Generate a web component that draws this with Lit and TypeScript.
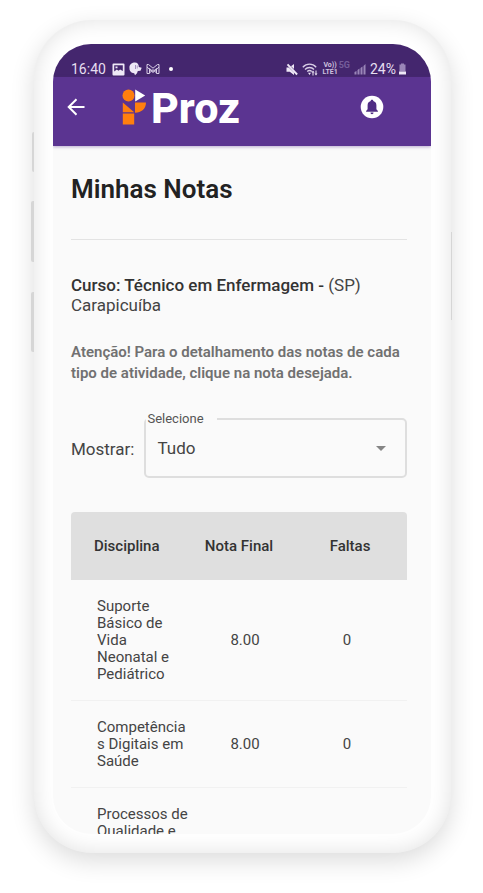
import { LitElement, html, css } from "lit";
import { customElement, state } from "lit/decorators.js";

interface Grade {
  subject: string;
  grade: string;
  absences: number;
}

const GRADES: Grade[] = [
  { subject: "Suporte Básico de Vida Neonatal e Pediátrico", grade: "8.00", absences: 0 },
  { subject: "Competências Digitais em Saúde", grade: "8.00", absences: 0 },
  { subject: "Processos de Qualidade e Segurança do Paciente", grade: "8.00", absences: 0 },
];

@customElement("status-bar")
class StatusBar extends LitElement {
  static styles = css`
    :host {
      display: flex;
      align-items: flex-end;
      justify-content: space-between;
      height: 33px;
      box-sizing: border-box;
      padding: 0 24px 0 18px;
      background: #44266e;
      color: #e6dff0;
      font: 14px/16px Roboto, sans-serif;
    }
    .group {
      display: flex;
      align-items: center;
      height: 16px;
      gap: 4px;
    }
    .clock {
      margin-right: 2px;
    }
    .dot {
      width: 4px;
      height: 4px;
      margin-left: 5px;
      border-radius: 50%;
      background: #fff;
    }
    .volte {
      display: grid;
      font: bold 7px/7px Roboto, sans-serif;
      text-align: center;
      color: #cdc1de;
    }
    .net {
      align-self: flex-start;
      margin-left: -3px;
      font: bold 9px/9px Roboto, sans-serif;
      color: #755d9b;
    }
    .battery {
      margin-left: -2px;
    }
    svg {
      display: block;
      fill: #eee8f6;
    }
    .dim {
      fill: #9a86b8;
    }
  `;

  render() {
    return html`
      <div class="group">
        <span class="clock">16:40</span>
        <svg width="13" height="13" viewBox="0 0 13 13" aria-hidden="true">
          <path fill-rule="evenodd" d="M1.500 .5h10a1 1 0 0 1 1 1v10a1 1 0 0 1-1 1h-10a1 1 0 0 1-1-1v-10a1 1 0 0 1 1-1zM2.200 2.200v6.200l2.600-2 1.700 1.400 1.600-1.400 2.700 1.600V2.200zM3.500 3.400h2v1.800h-2z" />
        </svg>
        <svg width="13" height="14" viewBox="0 0 13 14" aria-hidden="true">
          <path d="M5 .5C8 0 10 2 9.800 5l2.900.8-1.200 3-2.700.3-.8 2.200-2 2-.8-2.100C2 11 .3 8.600.5 6 0 3.500 2 .8 5 .5z" />
          <path class="dim" d="M6 3h.9v4H6zM7.800 3.500h.8v3h-.8z" />
        </svg>
        <svg width="14" height="12" viewBox="0 0 14 12" aria-hidden="true">
          <g fill="none" stroke="#d8cee6">
            <path d="M1 1.500v9h2.500v-5L7 8.500l3.500-3v5H13v-9h-1.500L7 5.200 2.500 1.500z" />
            <path d="M1 4 7 9.500 13 4M3.500 10 7 6.500l3.500 3.500" />
          </g>
        </svg>
        <span class="dot"></span>
      </div>
      <div class="group">
        <svg width="12" height="13" viewBox="0 0 12 13" aria-hidden="true">
          <path d="M.5 4.500h2.300l5.200 5V12L3.800 8.800H.5z" />
          <path d="M8 1v5L5 3.300z" />
          <path d="M.8 2 2.200.8l9.600 10-1.400 1.400z" />
        </svg>
        <svg width="16" height="13" viewBox="0 0 16 13" aria-hidden="true">
          <g fill="none" stroke="#d8cee6" stroke-width="1.300">
            <path d="M.8 4.200C4.500.2 10.500.2 14.200 4.200" />
            <path d="M3 6.500c2.500-2.700 6.500-2.700 9 0" />
            <path d="M5.200 8.600c1.400-1.300 3.200-1.300 4.600 0" />
          </g>
          <path d="M6 9.800h3L7.500 12zM11 7.500l1.500 2h-1v3h-1v-3h-1zM14 12.500l1.500-2h-1v-3h-1v3h-1z" />
        </svg>
        <span class="volte"><span>Vo))</span><span>LTE1</span></span>
        <span class="net">5G</span>
        <svg width="12" height="12" viewBox="0 0 12 12" aria-hidden="true">
          <path class="dim" d="M.5 11.500V9l2-1v3.500zM3.500 11.500V7l2-1.500v6zM6.500 11.500V5l2-1.500v8zM9.500 11.500V3l2-2v10.500z" />
        </svg>
        <span>24%</span>
        <svg class="battery" width="9" height="12" viewBox="0 0 9 12" aria-hidden="true">
          <path class="dim" d="M3 .5h3v1h1.500v7h-6v-7H3z" />
          <path d="M1 8.500h7v3H1z" />
        </svg>
      </div>
    `;
  }
}

@customElement("app-bar")
class AppBar extends LitElement {
  static styles = css`
    :host {
      display: flex;
      align-items: flex-start;
      height: 69px;
      box-sizing: border-box;
      padding: 12px 44px 0 10px;
      background: #5b3491;
      box-shadow: 0 1px 3px rgba(91, 52, 145, 0.4);
    }
    button {
      display: grid;
      place-items: center;
      padding: 0;
      border: 0;
      background: none;
      cursor: pointer;
    }
    .back {
      width: 26px;
      height: 36px;
    }
    .bell {
      width: 30px;
      height: 36px;
      margin-left: auto;
    }
    .brand {
      display: flex;
      align-items: flex-start;
      gap: 4px;
      margin-left: 33px;
      color: #fff;
      text-decoration: none;
      font: 800 43px/38px Roboto, sans-serif;
    }
    svg {
      display: block;
    }
  `;

  render() {
    return html`
      <button class="back" aria-label="Voltar">
        <svg width="18" height="18" viewBox="0 0 18 18" fill="none" stroke="#fff" stroke-width="2">
          <path d="M17.500 9H2M9.500 1.200 1.700 9l7.800 7.800" />
        </svg>
      </button>
      <a class="brand" href="#">
        <svg width="25" height="36" viewBox="0 0 25 36" aria-hidden="true">
          <circle cx="6.500" cy="6.500" r="6" fill="#ff7f0e" />
          <path d="M13.200.5 23.200 6.500 13.200 12.500z" fill="#fff" />
          <path d="M.8 13.500 12.200 23.200H.8zM13 13.500h11c0 6-4.500 10.300-11 10.300zM.8 24.400h11.400V35.500H.8z" fill="#ff7f0e" />
        </svg>
        <span>Proz</span>
      </a>
      <button class="bell" aria-label="Notificações">
        <svg width="24" height="24" viewBox="0 0 24 24">
          <circle cx="12" cy="12" r="11.300" fill="#fff" />
          <path d="M12 4.800c.8 0 1.300.5 1.300 1.200 2 .6 3.100 2.200 3.100 4.300v4l1.500 1.700v.7H6.100V16l1.500-1.700v-4c0-2.100 1.100-3.700 3.100-4.300 0-.7.500-1.200 1.300-1.200zM10.500 17.600h3c0 .9-.6 1.600-1.500 1.600s-1.500-.7-1.500-1.600z" fill="#4f2c83" />
        </svg>
      </button>
    `;
  }
}

@customElement("grades-page")
class GradesPage extends LitElement {
  @state() private filter = "tudo";

  static styles = css`
    :host {
      display: block;
      padding: 27px 24px 0 18px;
      color: #444;
      font: 17px/20px Roboto, sans-serif;
    }
    h1 {
      margin: 0;
      padding-bottom: 34px;
      border-bottom: 1px solid #e3e3e3;
      color: #222;
      font-size: 26px;
      font-weight: 600;
      line-height: 32px;
    }
    .course {
      margin: 35px 0 27px;
    }
    .course b {
      font-weight: 500;
      color: #333;
    }
    .hint {
      margin: 0 0 26px;
      color: #717171;
      font-size: 15px;
      font-weight: 600;
      line-height: 21px;
    }
    .filter {
      display: flex;
      align-items: center;
      gap: 10px;
      margin-bottom: 34px;
    }
    .caption {
      padding-top: 10px;
    }
    fieldset {
      flex: 1;
      min-width: 0;
      margin: 0;
      padding: 0;
      border: 2px solid #dedede;
      border-radius: 5px;
    }
    legend {
      padding: 0 13px 0 1px;
      color: #555;
      font-size: 13px;
      line-height: 18px;
    }
    .select {
      display: flex;
      align-items: center;
      height: 48px;
      padding: 0 19px 0 11px;
    }
    select {
      flex: 1;
      min-width: 0;
      padding: 0 0 8px;
      border: 0;
      appearance: none;
      background: none;
      color: #444;
      font: 17px/20px Roboto, sans-serif;
    }
    .arrow {
      margin-bottom: 8px;
      fill: #858585;
      pointer-events: none;
    }
    table {
      width: 100%;
      table-layout: fixed;
      border-spacing: 0;
      font-size: 15px;
      line-height: 17px;
    }
    th {
      height: 68px;
      padding: 0;
      background: #dfdfdf;
      color: #333;
      font-weight: 500;
    }
    th:first-child {
      width: 120px;
      box-sizing: border-box;
      padding-left: 23px;
      border-radius: 4px 0 0 0;
      text-align: left;
    }
    th:nth-child(2) {
      width: 96px;
    }
    th:last-child {
      padding-left: 6px;
      border-radius: 0 4px 0 0;
    }
    td {
      padding: 18px 0 17px;
      border-bottom: 1px solid #f1f1f1;
      text-align: center;
    }
    td:first-child {
      padding-right: 2px;
      padding-left: 26px;
      overflow-wrap: anywhere;
      text-align: left;
    }
    td:nth-child(2) {
      padding-left: 12px;
    }
  `;

  private onFilter(e: Event) {
    this.filter = (e.target as HTMLSelectElement).value;
  }

  render() {
    return html`
      <h1>Minhas Notas</h1>
      <p class="course"><b>Curso: Técnico em Enfermagem -</b> (SP) Carapicuíba</p>
      <p class="hint">
        Atenção! Para o detalhamento das notas de cada tipo de atividade, clique na nota desejada.
      </p>
      <div class="filter">
        <span class="caption">Mostrar:</span>
        <fieldset>
          <legend><label for="filter">Selecione</label></legend>
          <div class="select">
            <select id="filter" .value=${this.filter} @change=${this.onFilter}>
              <option value="tudo">Tudo</option>
            </select>
            <svg class="arrow" width="10" height="5" viewBox="0 0 10 5" aria-hidden="true">
              <path d="M0 0h10L5 5z" />
            </svg>
          </div>
        </fieldset>
      </div>
      <table>
        <thead>
          <tr>
            <th scope="col">Disciplina</th>
            <th scope="col">Nota Final</th>
            <th scope="col">Faltas</th>
          </tr>
        </thead>
        <tbody>
          ${GRADES.map(
            (g) => html`<tr>
              <td>${g.subject}</td>
              <td>${g.grade}</td>
              <td>${g.absences}</td>
            </tr>`
          )}
        </tbody>
      </table>
    `;
  }
}

@customElement("app-root")
class AppRoot extends LitElement {
  static styles = css`
    :host {
      display: flex;
      height: 100vh;
      box-sizing: border-box;
      padding: 20px 32px 40px 34px;
      background: #fff;
      overflow: hidden;
    }
    .phone {
      position: relative;
      display: flex;
      flex: 1;
      min-width: 0;
      box-sizing: border-box;
      padding: 24px 20px 19px 19px;
      border-radius: 58px;
      background: #fff;
      box-shadow: 0 8px 24px rgba(0, 0, 0, 0.14), inset 0 0 22px rgba(0, 0, 0, 0.12);
    }
    .screen {
      flex: 1;
      min-width: 0;
      border-radius: 38px;
      background: #fafafa;
      overflow: hidden;
    }
    .key {
      position: absolute;
      right: 100%;
      width: 3px;
      border-radius: 2px 0 0 2px;
      background: #d6d6d6;
    }
    .mute {
      top: 112px;
      width: 2px;
      height: 40px;
    }
    .up {
      top: 181px;
      height: 61px;
    }
    .down {
      top: 272px;
      height: 60px;
    }
    .power {
      top: 212px;
      right: auto;
      left: 100%;
      width: 1px;
      height: 88px;
      border-radius: 0;
    }
  `;

  render() {
    return html`
      <div class="phone">
        <span class="key mute"></span>
        <span class="key up"></span>
        <span class="key down"></span>
        <span class="key power"></span>
        <main class="screen">
          <status-bar></status-bar>
          <app-bar></app-bar>
          <grades-page></grades-page>
        </main>
      </div>
    `;
  }
}
